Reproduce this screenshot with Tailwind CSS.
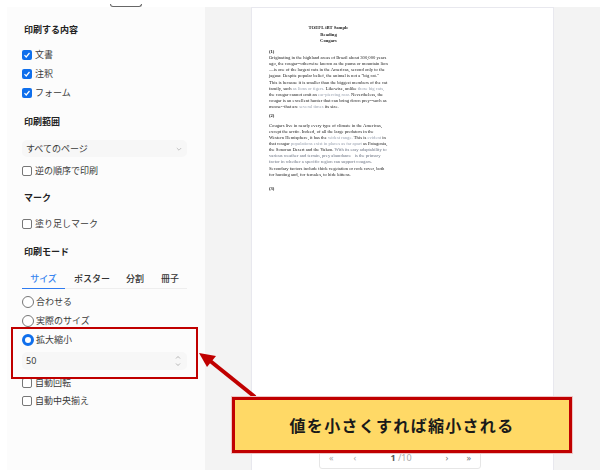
<!DOCTYPE html>
<html lang="ja">
<head>
<meta charset="UTF-8">
<title>印刷</title>
<script src="https://cdn.jsdelivr.net/npm/@tailwindcss/browser@4"></script>
</head>
<body class="bg-white font-['Noto_Sans_CJK_JP',sans-serif] text-[9px] text-[#3a3a3a]">
<div class="relative w-[600px] h-[470px] overflow-hidden">
  <!-- top strip -->
  <div class="h-[7px] relative">
    <div class="absolute left-[110px] top-[4px] w-[32px] h-[3px] border-b border-x border-[#666] rounded-b-[3px]"></div>
  </div>
  <div class="flex h-[463px]">
    <!-- sidebar -->
    <aside class="w-[205px] ml-[7px] -mr-[7px] shrink-0 bg-[#fcfcfc] pl-[15px] pr-[25px] pt-[15px] flex flex-col">
      <h2 class="h-4 pl-[2px] font-bold text-[#222] leading-4">印刷する内容</h2>
      <div class="mt-[7px] flex flex-col">
        <label class="h-[19px] flex items-center gap-[3px]">
          <span class="w-[10px] h-[10px] rounded-[2px] bg-[#0f6fec] flex items-center justify-center"><svg class="w-2 h-2" viewBox="0 0 8 8" fill="none" stroke="#fff" stroke-width="1.2"><path d="M1.5 4.2 3.2 6 6.5 2"/></svg></span>文書
        </label>
        <label class="h-[19px] flex items-center gap-[3px]">
          <span class="w-[10px] h-[10px] rounded-[2px] bg-[#0f6fec] flex items-center justify-center"><svg class="w-2 h-2" viewBox="0 0 8 8" fill="none" stroke="#fff" stroke-width="1.2"><path d="M1.5 4.2 3.2 6 6.5 2"/></svg></span>注釈
        </label>
        <label class="h-[19px] flex items-center gap-[3px]">
          <span class="w-[10px] h-[10px] rounded-[2px] bg-[#0f6fec] flex items-center justify-center"><svg class="w-2 h-2" viewBox="0 0 8 8" fill="none" stroke="#fff" stroke-width="1.2"><path d="M1.5 4.2 3.2 6 6.5 2"/></svg></span>フォーム
        </label>
      </div>
      <h2 class="mt-[12px] h-4 pl-[2px] font-bold text-[#222] leading-4">印刷範囲</h2>
      <div class="mt-[10px] h-[17px] rounded-[5px] bg-[#f7f7f7] pl-[4px] pr-[5px] flex items-center justify-between">
        <span>すべてのページ</span>
        <svg class="w-[6px] h-[6px]" viewBox="0 0 6 6" fill="none" stroke="#aaa" stroke-width=".7"><path d="M.8 2 3 4.2 5.2 2"/></svg>
      </div>
      <label class="mt-[4px] h-[19px] flex items-center gap-[3px]">
        <span class="w-[10px] h-[10px] rounded-[2px] border border-[#777] bg-white"></span>逆の順序で印刷
      </label>
      <h2 class="mt-[10px] h-4 pl-[2px] font-bold text-[#222] leading-4">マーク</h2>
      <label class="mt-[8px] h-[19px] flex items-center gap-[3px]">
        <span class="w-[10px] h-[10px] rounded-[2px] border border-[#777] bg-white"></span>塗り足しマーク
      </label>
      <h2 class="mt-[11px] h-4 pl-[2px] font-bold text-[#222] leading-4">印刷モード</h2>
      <div class="mt-[10px] h-[19px] flex border-b border-[#eee] font-medium text-[#333]">
        <span class="w-[43px] -mb-px border-b border-[#2f7bf0] text-center text-[#3a86f0] leading-[17px]">サイズ</span>
        <span class="w-[44px] pl-[9px] leading-[17px] whitespace-nowrap">ポスター</span>
        <span class="w-[35px] pl-[9px] leading-[17px] ml-[8px]">分割</span>
        <span class="pl-[9px] leading-[17px]">冊子</span>
      </div>
      <div class="mt-[3px] flex flex-col">
        <label class="h-[19px] flex items-center gap-[2px]"><span class="w-[12px] h-[12px] rounded-full border border-[#777] bg-white"></span>合わせる</label>
        <label class="h-[19px] flex items-center gap-[2px]"><span class="w-[12px] h-[12px] rounded-full border border-[#777] bg-white"></span>実際のサイズ</label>
        <label class="h-[19px] flex items-center gap-[2px]"><span class="w-[12px] h-[12px] rounded-full border-[3.5px] border-[#0f6fec] bg-white"></span>拡大縮小</label>
      </div>
      <div class="mt-[3px] h-[18px] rounded-[5px] bg-[#f7f7f7] pl-[4px] pr-[6px] flex items-center justify-between">
        <span class="font-['Noto_Sans',sans-serif]">50</span>
        <svg class="w-[6px] h-[12px]" viewBox="0 0 6 12" fill="none" stroke="#999" stroke-width=".7"><path d="M1 3.5 3 1.5 5 3.5M1 8.5 3 10.5 5 8.5"/></svg>
      </div>
      <label class="mt-[3px] h-[19px] flex items-center gap-[3px]">
        <span class="w-[10px] h-[10px] rounded-[2px] border border-[#777] bg-white"></span>自動回転
      </label>
      <label class="h-[18px] flex items-center gap-[3px]">
        <span class="w-[10px] h-[10px] rounded-[2px] border border-[#777] bg-white"></span>自動中央揃え
      </label>
    </aside>
    <!-- preview -->
    <main class="flex-1 bg-[#f3f3f3] pl-[46px] pr-[46px]">
      <div class="h-full bg-white border-t border-x border-[#e8e8ee] pl-[17px] pt-[17px] font-['Liberation_Serif',serif] text-[4.65px] leading-[6.15px] text-[#222] whitespace-nowrap">
        <div class="blur-[0.25px]">
        <div class="w-[119px] text-center font-bold leading-[6.6px]">TOEFL iBT Sample<br>Reading<br>Cougars</div>
        <p class="mt-[4px] font-bold">(1)</p>
        <p>Originating in the highland areas of Brazil about 300,000 years<br>
        ago, the cougar--otherwise known as the puma or mountain lion<br>
        —is one of the largest cats in the Americas, second only to the<br>
        jaguar. Despite popular belief, the animal is not a "big cat."<br>
        This is because it is smaller than the biggest members of the cat<br>
        family, such <span class="text-gray-400">as lions or tigers.</span> Likewise, unlike <span class="text-gray-400">those big cats,</span><br>
        the cougar cannot emit an <span class="text-gray-400">ear-piercing roar.</span> Nevertheless, the<br>
        cougar is an excellent hunter that can bring down prey--such as<br>
        moose--that are <span class="text-gray-400">several times</span> its size.</p>
        <p class="mt-[3px] font-bold">(2)</p>
        <p class="mt-[3px]">Cougars live in nearly every type of climate in the Americas,<br>
        except the arctic. Indeed, of all the large predators in the<br>
        Western Hemisphere, it has the <span class="text-gray-400">widest range.</span> This is <span class="text-gray-400">evident</span> in<br>
        that cougar <span class="text-gray-400">populations exist in places as far apart</span> as Patagonia,<br>
        the Sonoran Desert and the Yukon. <span class="text-gray-500">With its easy adaptability to<br>
        various weather and terrain, prey abundance &nbsp; is the primary<br>
        factor in whether a specific region can support cougars.</span><br>
        Secondary factors include thick vegetation or rock cover, both<br>
        for hunting and, for females, to hide kittens.</p>
        <p class="mt-[8px] font-bold">(3)</p>
        </div>
      </div>
    </main>
  </div>

  <!-- pager -->
  <div class="absolute left-[319px] top-[445px] w-[162px] h-[24px] bg-white border border-[#e6e6e6] rounded-b-[3px] flex items-end justify-between px-[9px] pb-[4px] font-['Noto_Sans',sans-serif] text-[#aaa] text-[9px]">
    <span>«</span><span class="ml-[2px]">‹</span><span class="ml-[16px]"><b class="text-[#555]">1</b> /10</span><span class="ml-[16px] text-[#777]">›</span><span class="text-[#777]">»</span>
  </div>

  <!-- annotation -->
  <div class="absolute left-[11px] top-[327px] w-[187px] h-[52px] border-[2.5px] border-[#c00000]"></div>
  <svg class="absolute left-[195px] top-[345px]" width="70" height="60" viewBox="0 0 70 60">
    <path d="M60 52 14 15" stroke="#c00000" stroke-width="4" fill="none"/>
    <path d="M4 8 21 11 12 22Z" fill="#c00000"/>
  </svg>
  <div class="absolute left-[232px] top-[397px] w-[340px] h-[56px] bg-[#ffd966] border-[3px] border-[#c00000] shadow-[0_0_0_1px_#eec4c4] flex items-center justify-center text-[16px] font-bold tracking-[1.3px] text-[#1a1a1a]">値を小さくすれば縮小される</div>
</div>
</body>
</html>
